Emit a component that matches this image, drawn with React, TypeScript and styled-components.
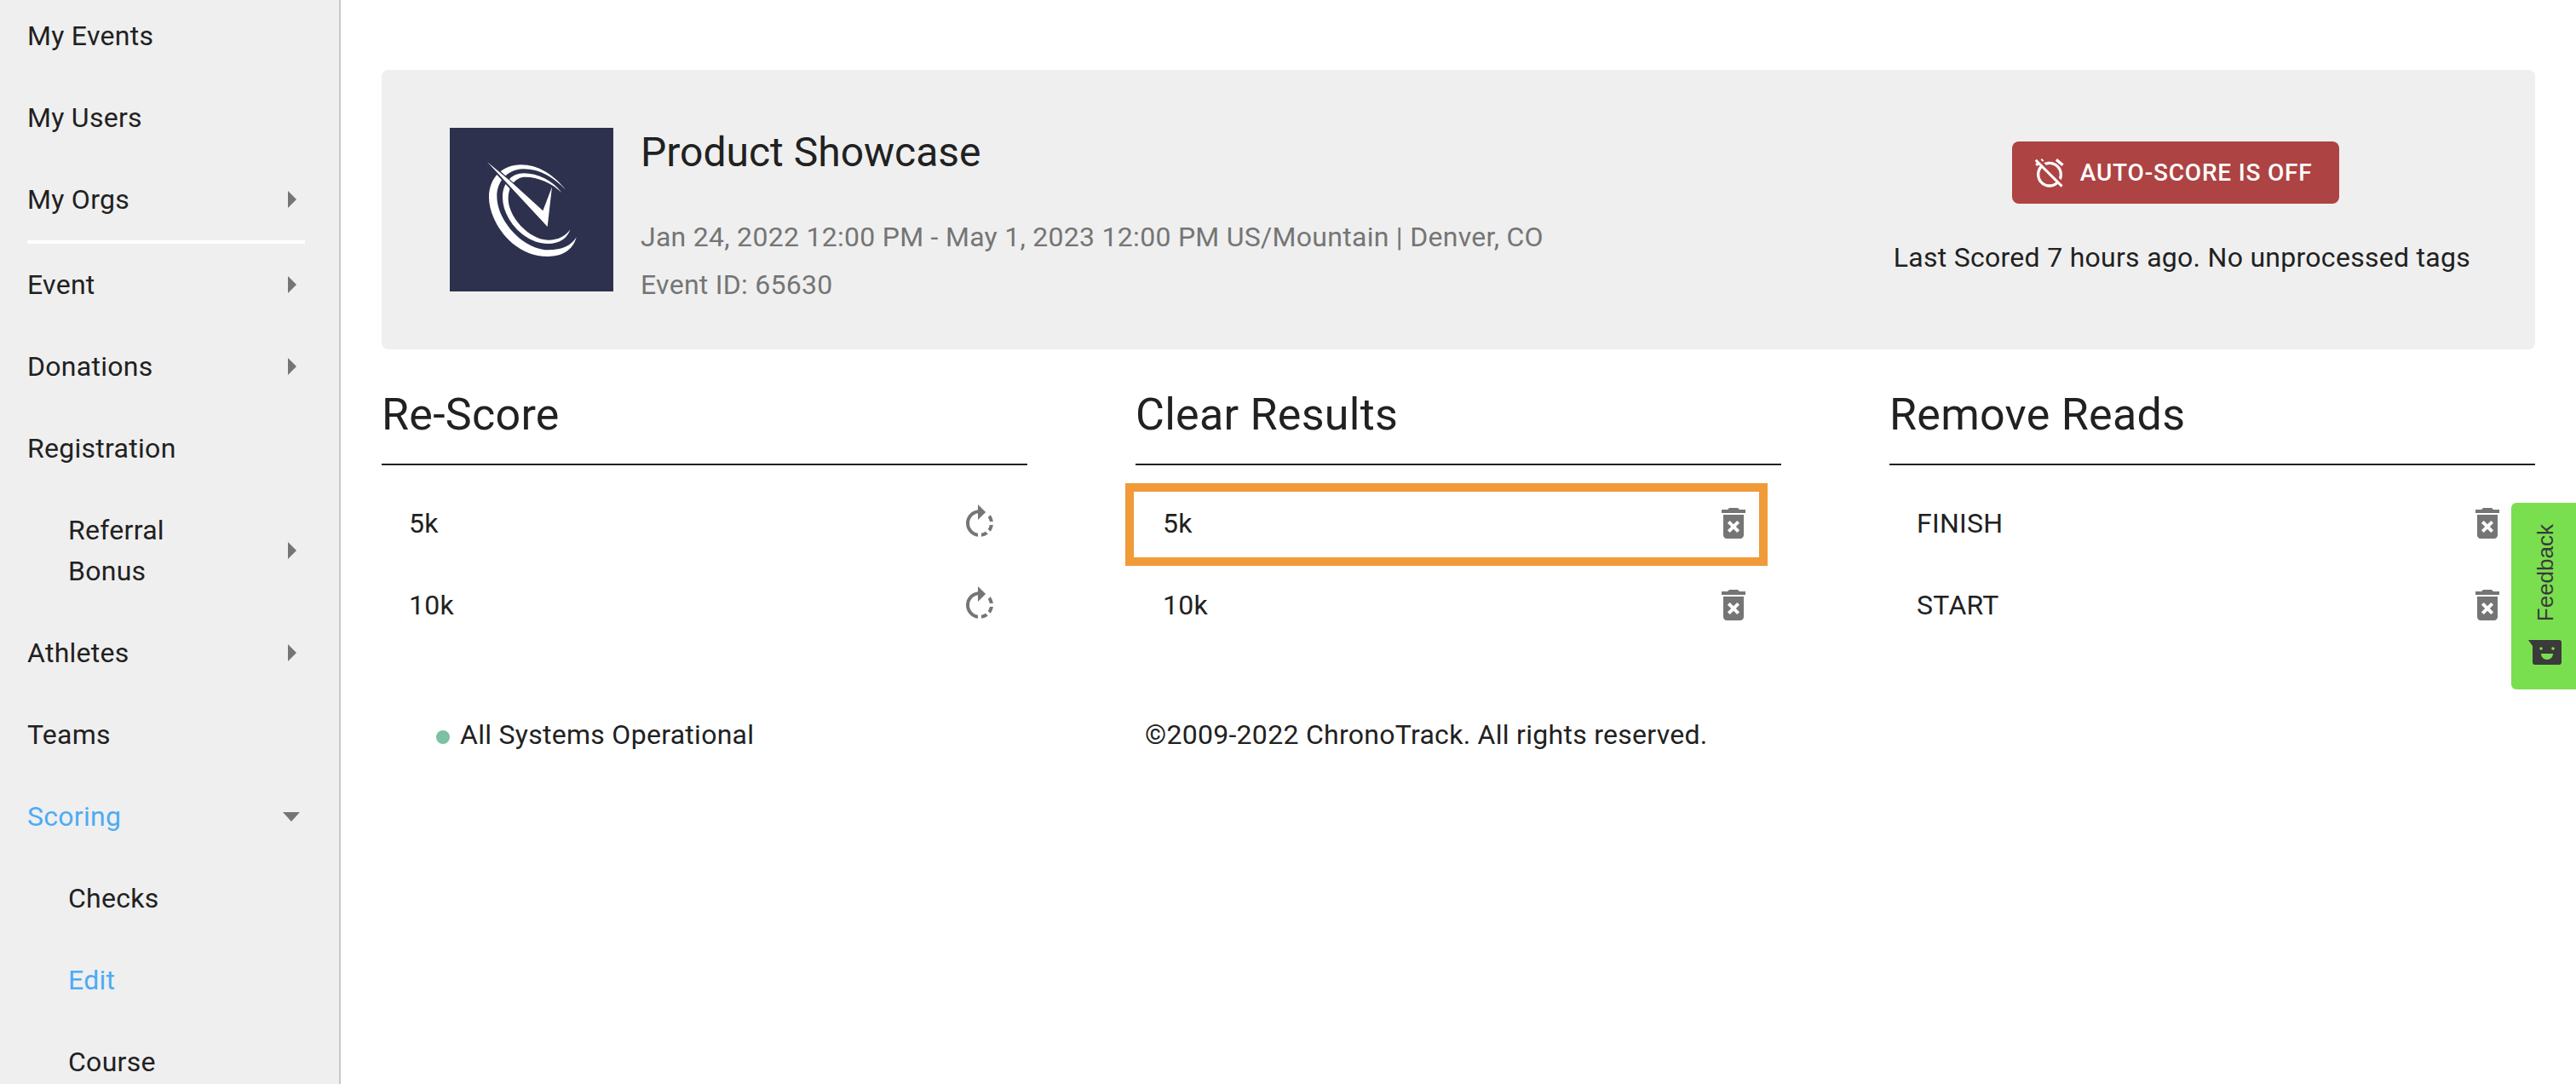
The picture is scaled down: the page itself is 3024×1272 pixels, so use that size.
import React from 'react';
import styled, { createGlobalStyle } from 'styled-components';

const Global = createGlobalStyle`
  html, body { margin: 0; padding: 0; background: #fff; }
  body { font-family: Roboto, "Liberation Sans", sans-serif; color: #212121; letter-spacing: 0.28px; }
`;

const Page = styled.div`
  display: flex;
  width: 3024px;
  height: 1272px;
  overflow: hidden;
  position: relative;
`;

const Sidebar = styled.nav`
  width: 398px;
  flex: none;
  background: #efefef;
  border-right: 2px solid #c8c8c8;
  overflow: hidden;
`;

const NavList = styled.div`
  margin-top: -6px;
  display: flex;
  flex-direction: column;
`;

const NavItem = styled.div<{ $sub?: boolean; $active?: boolean }>`
  display: flex;
  align-items: center;
  justify-content: space-between;
  padding: 24px 50px 24px ${p => (p.$sub ? 80 : 32)}px;
  font-size: 32px;
  line-height: 48px;
  color: ${p => (p.$active ? '#4dabf5' : '#212121')};
`;

const NavLabel = styled.span<{ $narrow?: boolean }>`
  display: block;
  ${p => (p.$narrow ? 'width: 150px;' : '')}
`;

const Divider = styled.div`
  height: 4px;
  margin: 0 40px 0 32px;
  background: #fff;
`;

const CaretRight = styled.span`
  width: 0;
  height: 0;
  border-top: 10px solid transparent;
  border-bottom: 10px solid transparent;
  border-left: 10px solid #757575;
`;

const CaretDown = styled.span`
  width: 0;
  height: 0;
  margin-right: -4px;
  border-left: 10px solid transparent;
  border-right: 10px solid transparent;
  border-top: 11px solid #757575;
`;

const Main = styled.main`
  flex: 1;
  padding: 82px 48px 0;
  min-width: 0;
`;

const Card = styled.section`
  height: 328px;
  box-sizing: border-box;
  padding: 0 76px 0 80px;
  display: flex;
  align-items: center;
  justify-content: space-between;
  background: #efefef;
  border-radius: 8px;
`;

const EventInfo = styled.div`
  display: flex;
  align-items: flex-start;
  gap: 32px;
  height: 192px;
`;

const Logo = styled.svg`
  display: block;
  width: 192px;
  height: 192px;
  flex: none;
`;

const EventText = styled.div`
  display: flex;
  flex-direction: column;
  margin-top: 0;
`;

const EventTitle = styled.h2`
  margin: 0 0 42px;
  font-size: 48px;
  line-height: 58px;
  font-weight: 400;
  letter-spacing: 0;
  color: #212121;
`;

const EventMeta = styled.div`
  font-size: 32px;
  line-height: 56px;
  color: #757575;
`;

const ScoreBox = styled.div`
  display: flex;
  flex-direction: column;
  align-items: center;
  gap: 39px;
`;

const ScoreButton = styled.button`
  display: flex;
  align-items: center;
  gap: 16px;
  width: 384px;
  height: 73px;
  padding: 0 0 0 24px;
  box-sizing: border-box;
  margin-right: 15px;
  border: 0;
  border-radius: 8px;
  background: #ad4343;
  color: #fff;
  font-family: inherit;
  font-size: 28px;
  font-weight: 500;
  letter-spacing: 0.8px;
`;

const ScoreNote = styled.div`
  font-size: 32px;
  line-height: 48px;
`;

const Columns = styled.div`
  display: grid;
  grid-template-columns: repeat(3, 758px);
  justify-content: space-between;
`;

const ColumnTitle = styled.h3`
  margin: 0;
  height: 136px;
  box-sizing: border-box;
  padding-top: 45px;
  border-bottom: 2px solid #212121;
  font-size: 52px;
  line-height: 64px;
  font-weight: 400;
`;

const Rows = styled.div`
  padding-top: 20px;
  position: relative;
`;

const Row = styled.div`
  display: flex;
  align-items: center;
  justify-content: space-between;
  height: 96px;
  padding: 0 32px;
  font-size: 32px;
`;

const RowIcon = styled.svg`
  display: block;
  width: 48px;
  height: 48px;
  fill: #757575;
`;

const Highlight = styled.div`
  position: absolute;
  left: -12px;
  top: 21px;
  width: 754px;
  height: 97px;
  box-sizing: border-box;
  border: 10px solid #f09a38;
`;

const Footer = styled.footer`
  display: flex;
  margin-top: 80px;
  font-size: 32px;
  line-height: 48px;
`;

const Status = styled.div`
  display: flex;
  align-items: center;
  width: 896px;
  padding-left: 64px;
  box-sizing: border-box;
  gap: 12px;
`;

const Dot = styled.span`
  width: 16px;
  height: 16px;
  margin-top: 6px;
  border-radius: 50%;
  background: #7dc0a2;
`;

const FeedbackTab = styled.aside`
  position: absolute;
  right: 0;
  top: 590px;
  width: 76px;
  height: 219px;
  box-sizing: border-box;
  display: flex;
  flex-direction: column;
  align-items: center;
  gap: 22px;
  padding: 25px 0 0 4px;
  background: #7adf4f;
  border-radius: 6px 0 0 6px;
  color: #3a3a3a;
`;

const FeedbackLabel = styled.span`
  writing-mode: vertical-rl;
  transform: rotate(180deg);
  font-family: "Liberation Sans", Arial, sans-serif;
  font-size: 26px;
  line-height: 30px;
  letter-spacing: 0;
`;

const Smile = styled.svg`
  display: block;
  width: 40px;
  height: 30px;
`;

const DeleteIcon = () => (
  <RowIcon viewBox="0 0 24 24">
    <path d="M6 19c0 1.1.9 2 2 2h8c1.1 0 2-.9 2-2V7H6v12zm2.46-7.12l1.41-1.41L12 12.59l2.12-2.12 1.41 1.41L13.41 14l2.12 2.12-1.41 1.41L12 15.41l-2.12 2.12-1.41-1.41L10.59 14l-2.13-2.12zM15.5 4l-1-1h-5l-1 1H5v2h14V4z" />
  </RowIcon>
);

const RotateIcon = () => (
  <RowIcon viewBox="0 0 24 24">
    <path d="M15.55 5.55L11 1v3.07C7.06 4.56 4 7.92 4 12s3.05 7.44 7 7.93v-2.02c-2.84-.48-5-2.94-5-5.91s2.16-5.43 5-5.91V10l4.55-4.45zM19.93 11c-.17-1.39-.72-2.73-1.62-3.89l-1.42 1.42c.54.75.88 1.6 1.02 2.47h2.02zM13 17.9v2.02c1.39-.17 2.74-.71 3.9-1.61l-1.44-1.44c-.75.54-1.59.89-2.46 1.03zm3.89-2.42l1.42 1.41c.9-1.16 1.45-2.5 1.62-3.89h-2.02c-.14.87-.48 1.72-1.02 2.48z" />
  </RowIcon>
);

const AlarmOff = () => (
  <svg width="40" height="40" viewBox="0 0 24 24" fill="#fff">
    <path d="M12 6c3.87 0 7 3.13 7 7 0 .84-.16 1.65-.43 2.4l1.52 1.52c.58-1.19.91-2.51.91-3.92 0-4.97-4.03-9-9-9-1.41 0-2.73.33-3.92.91L9.6 6.43C10.35 6.16 11.16 6 12 6zm10-.28l-4.6-3.86-1.29 1.53 4.6 3.86L22 5.72zM2.92 2.29L1.65 3.57 2.98 4.9l-1.11.93 1.42 1.42 1.11-.94.8.8C3.83 8.69 3 10.75 3 13c0 4.97 4.02 9 9 9 2.25 0 4.31-.83 5.89-2.2l2.2 2.2 1.27-1.27L3.89 3.27l-.97-.98zm13.55 16.1C15.26 19.39 13.7 20 12 20c-3.87 0-7-3.13-7-7 0-1.7.61-3.26 1.61-4.47l9.86 9.86zM8.02 3.28L6.6 1.86l-.86.71 1.42 1.42.86-.71z" />
  </svg>
);

const nav: { label: string; sub?: boolean; active?: boolean; caret?: 'right' | 'down'; narrow?: boolean; dividerAfter?: boolean }[] = [
  { label: 'My Events' },
  { label: 'My Users' },
  { label: 'My Orgs', caret: 'right', dividerAfter: true },
  { label: 'Event', caret: 'right' },
  { label: 'Donations', caret: 'right' },
  { label: 'Registration' },
  { label: 'Referral Bonus', sub: true, caret: 'right', narrow: true },
  { label: 'Athletes', caret: 'right' },
  { label: 'Teams' },
  { label: 'Scoring', active: true, caret: 'down' },
  { label: 'Checks', sub: true },
  { label: 'Edit', sub: true, active: true },
  { label: 'Course', sub: true },
];

const columns = [
  { title: 'Re-Score', rows: ['5k', '10k'], icon: <RotateIcon />, highlight: false },
  { title: 'Clear Results', rows: ['5k', '10k'], icon: <DeleteIcon />, highlight: true },
  { title: 'Remove Reads', rows: ['FINISH', 'START'], icon: <DeleteIcon />, highlight: false },
];

export default function App() {
  return (
    <Page>
      <Global />
      <Sidebar>
        <NavList>
          {nav.map(item => (
            <React.Fragment key={item.label}>
              <NavItem $sub={item.sub} $active={item.active}>
                <NavLabel $narrow={item.narrow}>{item.label}</NavLabel>
                {item.caret === 'right' && <CaretRight />}
                {item.caret === 'down' && <CaretDown />}
              </NavItem>
              {item.dividerAfter && <Divider />}
            </React.Fragment>
          ))}
        </NavList>
      </Sidebar>
      <Main>
        <Card>
          <EventInfo>
            <Logo viewBox="84 60 576 576">
              <rect x="84" y="60" width="576" height="576" fill="#2d314e" />
              <path
                fill="#fff"
                d="M492 278C450 225 395 190 335 190C270 190 222 235 222 305C222 385 300 513 430 513C480 513 518 490 530 445C512 475 478 490 432 490C345 490 250 390 250 300C250 250 285 208 340 205C400 203 450 235 492 278Z"
              />
              <path
                fill="#fff"
                d="M478 288C445 245 395 220 345 220C300 220 270 255 270 305C270 380 345 468 430 468C470 468 498 450 508 418C490 443 465 455 432 455C365 455 290 375 290 310C290 265 315 233 350 233C395 233 445 255 478 288Z"
              />
              <path
                fill="#2d314e"
                stroke="#2d314e"
                strokeWidth="12"
                d="M216 180L428 408L412 352Z"
              />
              <path fill="#fff" d="M216 180L428 408L444 268L412 352L298 248Z" />
            </Logo>
            <EventText>
              <EventTitle>Product Showcase</EventTitle>
              <EventMeta>Jan 24, 2022 12:00 PM - May 1, 2023 12:00 PM US/Mountain | Denver, CO</EventMeta>
              <EventMeta>Event ID: 65630</EventMeta>
            </EventText>
          </EventInfo>
          <ScoreBox>
            <ScoreButton>
              <AlarmOff />
              AUTO-SCORE IS OFF
            </ScoreButton>
            <ScoreNote>Last Scored 7 hours ago. No unprocessed tags</ScoreNote>
          </ScoreBox>
        </Card>
        <Columns>
          {columns.map(col => (
            <div key={col.title}>
              <ColumnTitle>{col.title}</ColumnTitle>
              <Rows>
                {col.highlight && <Highlight />}
                {col.rows.map(r => (
                  <Row key={r}>
                    {r}
                    {col.icon}
                  </Row>
                ))}
              </Rows>
            </div>
          ))}
        </Columns>
        <Footer>
          <Status>
            <Dot />
            All Systems Operational
          </Status>
          <div>©2009-2022 ChronoTrack. All rights reserved.</div>
        </Footer>
      </Main>
      <FeedbackTab>
        <FeedbackLabel>Feedback</FeedbackLabel>
        <Smile viewBox="0 0 40 30">
          <path
            fill="#3a3a3a"
            d="M0 0H36a3 3 0 0 1 3 3V26a3 3 0 0 1-3 3H8a3 3 0 0 1-3-3V7Z"
          />
          <circle cx="15" cy="10" r="1.8" fill="#7adf4f" />
          <circle cx="29" cy="10" r="1.8" fill="#7adf4f" />
          <path d="M15 16H29C29 20 26 23 22 23C18 23 15 20 15 16Z" fill="#7adf4f" />
        </Smile>
      </FeedbackTab>
    </Page>
  );
}
